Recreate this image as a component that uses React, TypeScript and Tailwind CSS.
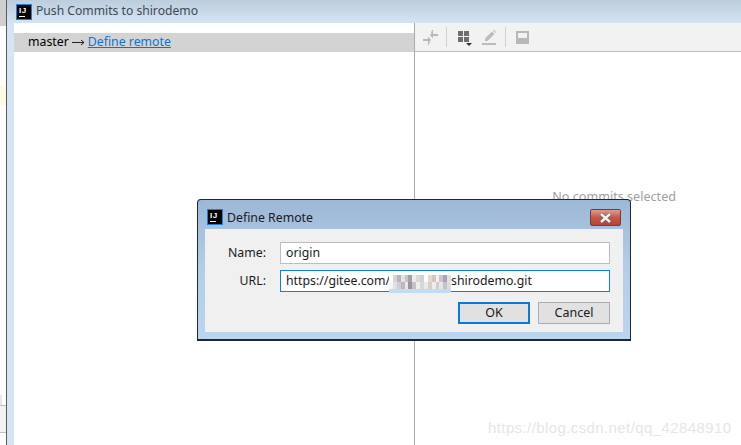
const cells = [
  '#ffffff', '#d8d4d6', '#b9b4bc', '#e6e3e2', '#c9c5cb', '#a79fa8', '#efeceb', '#dcd8d8', '#cfd3d6', '#fbfbfb', '#e5d8cc', '#d2c8c0', '#f2f2f2', '#c8c4d0', '#a9a4b4', '#e2e2e2',
  '#f5f5f5', '#e0dfe3', '#d0ccd2', '#bdb7bf', '#e8e6e6', '#9c92a2', '#c4c0c4', '#eeeeee', '#d5d9dc', '#e9e9e9', '#d8cfc6', '#ececec', '#cfcfcf', '#e6e6e6', '#c4c2cc', '#dddddd',
];

function IJ() {
  return (
    <div className="w-[16px] h-[16px] bg-black border border-[#1a7fd8] flex flex-col items-start pl-[1px] pt-[2px] shrink-0 overflow-hidden">
      <span className="text-white text-[8px] leading-[7px] font-bold font-['Liberation_Sans',sans-serif] tracking-[0.5px] ml-[1px]">IJ</span>
      <span className="w-[6px] h-[1px] bg-white mt-[2px] ml-[1px]" />
    </div>
  );
}

export default function App() {
  return (
    <div className="relative w-[741px] h-[445px] overflow-hidden bg-white flex font-['Noto_Sans',sans-serif]">
      <div className="w-[6px] h-full bg-white flex flex-col">
        <div className="h-[26px] bg-[#cfcfcf]" />
        <div className="h-[60px]" />
        <div className="h-[19px] bg-[#fdfbe6]" />
        <div className="flex-1" />
        <div className="h-[10px] bg-[#e8e8e8] w-[2px]" />
        <div className="h-[28px] bg-[#f2f2f2] border-y border-[#c0c0c0]" />
        <div className="h-[12px]" />
      </div>
      <div className="w-px h-full bg-[#5a5a5a]" />
      <div className="flex-1 flex flex-col min-w-0">
        <div className="h-[23px] flex items-center pl-[9px] gap-[4px] bg-gradient-to-b from-[#bccddd] to-[#d5e4f2] text-[12.15px] text-[#3c4a57]">
          <IJ />
          <span>Push Commits to shirodemo</span>
        </div>
        <div className="flex-1 flex min-h-0 pl-[7px] bg-[#d6e4f3]">
          <div className="w-[400px] bg-white pt-[10px]">
            <div className="h-[19px] bg-[#d3d3d3] flex items-center pl-[14px] text-[12.3px] text-black">
              <span>master</span>
              <svg className="mx-[3px]" width="13" height="9" viewBox="0 0 13 9" fill="none" stroke="#222" strokeWidth="1">
                <path d="M0 4.5 H12 M9 2 L12 4.5 L9 7" />
              </svg>
              <span className="text-[#0a74d6] underline">Define remote</span>
            </div>
          </div>
          <div className="w-px bg-[#aaaaaa]" />
          <div className="flex-1 flex flex-col bg-white">
            <div className="h-[29px] bg-[#f2f2f2] border-b border-[#bcbcbc] flex items-center pl-[8px]">
              <svg width="15" height="15" viewBox="0 0 15 15" fill="#b8b8b8">
                <path d="M7 5 L10 1.5 V4 H15 V6 H10 V8.5 Z" />
                <path d="M8 10 L5 6.5 V9 H0 V11 H5 V13.5 Z" />
                <path d="M9 0 H10.5 L9 3 H8 Z M5.5 12 H7 L5.5 15 H4.5 Z" />
              </svg>
              <div className="w-px h-[20px] bg-[#d0d0d0] ml-[8px]" />
              <svg className="ml-[11px] mt-[4px]" width="15" height="17" viewBox="0 0 15 17" fill="#6e6e6e">
                <rect x="0" y="0" width="5" height="5" />
                <rect x="6" y="0" width="5" height="5" />
                <rect x="0" y="6" width="5" height="5" />
                <rect x="6" y="6" width="5" height="5" />
                <path d="M8 12 H14 L11 15 Z" fill="#333" />
              </svg>
              <svg className="ml-[9px]" width="15" height="15" viewBox="0 0 15 15" fill="#bcbcbc">
                <path d="M3 8.5 L10 1.5 L12.5 4 L5.5 11 H3 Z" />
                <path d="M11 0.5 L12 0 L14 2 L13.5 3 Z" />
                <rect x="0" y="13" width="14" height="2" />
              </svg>
              <div className="w-px h-[20px] bg-[#d0d0d0] ml-[8px]" />
              <svg className="ml-[10px]" width="13" height="13" viewBox="0 0 13 13">
                <rect width="13" height="13" fill="#b8b8b8" />
                <rect x="2" y="2" width="9" height="5" fill="#f2f2f2" />
              </svg>
            </div>
            <div className="flex-1 flex justify-end pr-[65px] pt-[136px]">
              <span className="text-[12.6px] leading-[18px] text-[#a0a0a0]">No commits selected</span>
            </div>
          </div>
        </div>
      </div>

      <div className="absolute left-[197px] top-[199px] w-[434px] h-[142px] rounded-t-[4px] border border-[#1c2a30] border-b-2 bg-gradient-to-b from-[#9db8d6] via-[#b4cde8] to-[#bcd5ee] flex flex-col px-[7px] pb-[7px]">
        <div className="h-[29px] flex items-start pt-[9px] pl-[2px] gap-[4px] text-[12.3px] leading-[18px] text-[#1a1a1a]">
          <IJ />
          <span>Define Remote</span>
          <div className="ml-auto mr-[2px] w-[31px] h-[17px] rounded-[2px] border border-[#7a3a34] bg-gradient-to-b from-[#dd9c92] via-[#c4574a] to-[#b5433a] flex items-center justify-center">
            <svg width="15" height="10" viewBox="0 0 15 10">
              <path d="M3 1 L12 9 M12 1 L3 9" stroke="#5a5a5a" strokeWidth="3.6" />
              <path d="M3 1 L12 9 M12 1 L3 9" stroke="#f2f2f2" strokeWidth="2.4" />
            </svg>
          </div>
        </div>
        <div className="flex-1 bg-[#f0f0f0] pt-[13px] pl-[8px] pr-[13px] text-[12.3px] text-[#1a1a1a] flex flex-col">
          <div className="flex items-center h-[22px]">
            <span className="w-[53px] text-right">Name:</span>
            <div className="ml-[14px] flex-1 h-[22px] bg-white border border-[#bdbdbd] flex items-center px-[5px] text-[12.3px]">origin</div>
          </div>
          <div className="flex items-center h-[22px] mt-[6px]">
            <span className="w-[53px] text-right">URL:</span>
            <div className="relative ml-[14px] flex-1 h-[22px] bg-white border border-[#0a82dc] flex items-center pl-[5px] text-[12.3px]">
              <span className="w-[105px] shrink-0">https://gitee.com/</span>
              <span className="w-[60px] shrink-0" />
              <span>shirodemo.git</span>
              <div className="absolute left-[108px] top-[4px] w-[62px] h-[18px] flex flex-col">
                <div className="flex-1 grid grid-cols-16">
                  {cells.map((c, i) => (
                    <span key={i} style={{ backgroundColor: c }} />
                  ))}
                </div>
                <div className="h-[4px] bg-[#c4dcf2]" />
              </div>
            </div>
          </div>
          <div className="flex justify-end gap-[8px] mt-[10px] text-[12.5px]">
            <div className="w-[72px] h-[22px] border-2 border-[#0a7ad6] bg-[#e1e1e1] flex items-center justify-center">OK</div>
            <div className="w-[72px] h-[22px] border border-[#adadad] bg-[#e1e1e1] flex items-center justify-center">Cancel</div>
          </div>
        </div>
      </div>

      <span className="absolute left-[488px] top-[417px] text-[15px] tracking-[0.4px] text-[#e6e6e6] font-['Liberation_Sans',sans-serif]">https://blog.csdn.net/qq_42848910</span>
    </div>
  );
}
